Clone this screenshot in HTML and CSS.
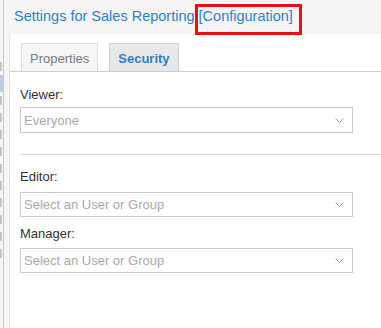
FILE: index.html
```
<!doctype html>
<html lang="en">
    <head>
        <meta charset="UTF-8" />
        <title>Settings for Sales Reporting</title>
        <link rel="stylesheet" href="styles.css">
    </head>
    <body>
        <!-- clipped bits of the page behind the dialog -->
        <div class="page-edge">
            <i class="mark"></i>
            <i class="mark picked"></i>
            <i class="mark"></i>
            <i class="mark"></i>
            <i class="mark"></i>
            <i class="mark"></i>
            <i class="mark"></i>
            <i class="mark"></i>
            <i class="mark"></i>
            <i class="mark"></i>
            <i class="mark"></i>
            <i class="mark"></i>
        </div>

        <div class="dialog">
            <div class="dialog-header">
                <span class="title">Settings for Sales Reporting [Configuration]</span>
            </div>

            <div class="dialog-body">
                <div class="panel">
                    <div class="tabs">
                        <div class="tab">Properties</div>
                        <div class="tab active">Security</div>
                    </div>

                    <div class="tab-content">
                        <div class="field viewer">
                            <label>Viewer:</label>
                            <div class="select">
                                <span>Everyone</span>
                                <svg width="9" height="5" viewBox="0 0 9 5">
                                    <polyline points="0.5,0.5 4.5,4.5 8.5,0.5" fill="none" stroke="#a0a0a0" stroke-width="1" />
                                </svg>
                            </div>
                        </div>

                        <div class="separator"></div>

                        <div class="field editor">
                            <label>Editor:</label>
                            <div class="select">
                                <span>Select an User or Group</span>
                                <svg width="9" height="5" viewBox="0 0 9 5">
                                    <polyline points="0.5,0.5 4.5,4.5 8.5,0.5" fill="none" stroke="#a0a0a0" stroke-width="1" />
                                </svg>
                            </div>
                        </div>

                        <div class="field manager">
                            <label>Manager:</label>
                            <div class="select">
                                <span>Select an User or Group</span>
                                <svg width="9" height="5" viewBox="0 0 9 5">
                                    <polyline points="0.5,0.5 4.5,4.5 8.5,0.5" fill="none" stroke="#a0a0a0" stroke-width="1" />
                                </svg>
                            </div>
                        </div>
                    </div>
                </div>
            </div>
        </div>

        <!-- annotation box drawn over the title -->
        <div class="highlight"></div>
    </body>
</html>
```

FILE: styles.css
```
html,
body {
    height: 100%;
}

body {
    margin: 0;
    background-color: #f7f7f7;
    font-family: "Liberation Sans", Arial, sans-serif;
    display: flex;
    overflow: hidden;
}

.page-edge {
    width: 3px;
    padding-top: 62px;
    display: flex;
    flex-direction: column;
    gap: 8px;
}

.page-edge .mark {
    display: block;
    width: 2px;
    height: 9px;
    background-color: #c4c4c4;
}

.page-edge .picked {
    width: 3px;
    height: 17px;
    margin: -4px 0;
    background-color: #b9cdea;
}

.dialog {
    flex: 1;
    display: flex;
    flex-direction: column;
    border-left: 1px solid #c9c9c9;
    background-color: #f5f5f5;
}

.dialog-header {
    height: 34px;
    box-sizing: border-box;
    padding: 7px 0 0 10px;
}

.title {
    font-size: 14.5px;
    line-height: 18px;
    color: #2e7fcc;
    white-space: nowrap;
}

.dialog-body {
    flex: 1;
    display: flex;
    padding-left: 5px;
}

.panel {
    flex: 1;
    background-color: #fff;
    border-left: 1px solid #e6e6e6;
}

.tabs {
    display: flex;
    gap: 11px;
    padding: 9px 0 0 11px;
    border-bottom: 1px solid #cfcfcf;
}

.tab {
    height: 28px;
    box-sizing: border-box;
    padding: 0 8px;
    border: 1px solid #dcdcdc;
    border-bottom: none;
    background-color: #f6f6f6;
    color: #7a7a7a;
    font-size: 13px;
    line-height: 29px;
}

.tab.active {
    border-color: #d2d2d2;
    background-color: #e8e8e8;
    color: #2e7fcc;
    font-weight: bold;
}

.tab-content {
    padding: 15px 0 0 10px;
}

.field label {
    display: block;
    font-size: 13px;
    line-height: 16px;
    color: #333;
}

.select {
    width: 333px;
    height: 25px;
    box-sizing: border-box;
    border: 1px solid #cccccc;
    display: flex;
    align-items: center;
    justify-content: space-between;
    padding: 0 8px 0 3px;
    font-size: 13px;
    color: #a8a8a8;
}

.viewer .select {
    height: 26px;
    margin-top: 4px;
}

.separator {
    margin-top: 21px;
    border-top: 1px solid #dddddd;
}

.editor {
    margin-top: 14px;
}

.editor .select {
    margin-top: 7px;
}

.manager {
    margin-top: 9px;
}

.manager .select {
    margin-top: 6px;
}

.highlight {
    position: absolute;
    left: 195px;
    top: 4px;
    width: 101px;
    height: 25px;
    border: 3px solid #e8101a;
}
```
